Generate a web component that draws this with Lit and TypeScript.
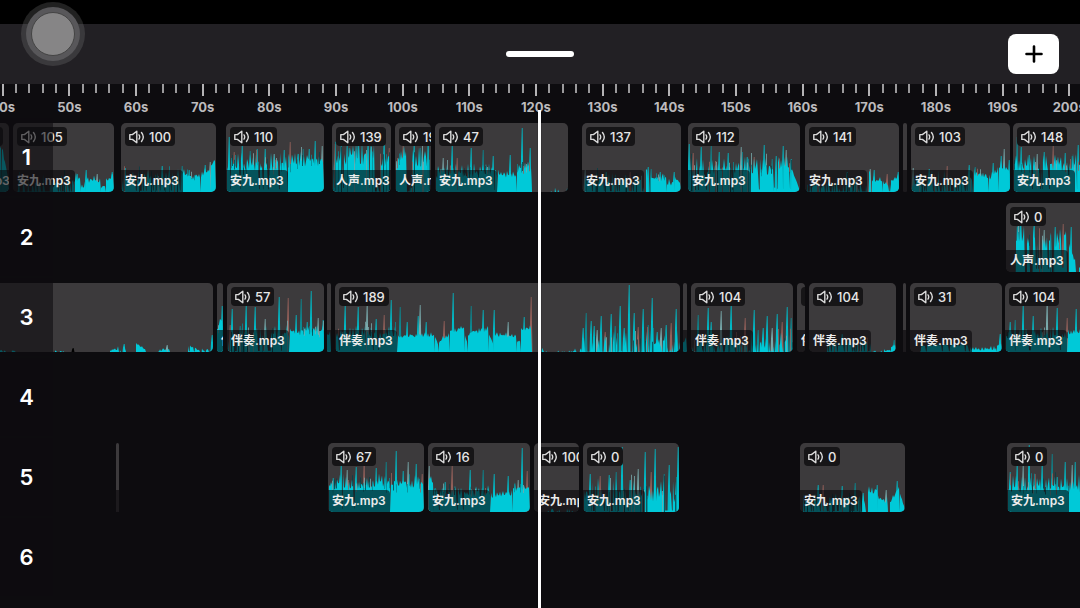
import { LitElement, html, svg, css } from "lit";
import { customElement, property } from "lit/decorators.js";
import { styleMap } from "lit/directives/style-map.js";

/** from, to, height at start, height at end, jitter, share of silent columns */
type Segment = [number, number, number, number, number, number];
/** x, height */
type Spike = [number, number];

interface Clip {
  start: number;
  end: number;
  name?: string;
  volume?: number;
  wave?: Segment[];
  spikes?: Spike[];
}

const CLIP_HEIGHT = 69;
const PX_PER_TEN_SECONDS = 200 / 3;
const FIRST_MARK = 40;
const FIRST_MARK_X = 8 / 3;

const V = "人声.mp3";
const A = "安九.mp3";
const B = "伴奏.mp3";

const tracks: Clip[][] = [
  [
    { start: -48, end: 9, name: A, volume: 110, wave: [[44, 50, 26, 46, 6, 0], [50, 57, 40, 10, 6, 0]] },
    { start: 13, end: 114, name: A, volume: 105, wave: [[4, 62, 2, 4, 14, 0.4], [62, 68, 8, 12, 10, 0.2], [68, 73, 3, 5, 6, 0], [73, 88, 9, 7, 8, 0], [88, 93, 3, 4, 4, 0], [93, 101, 10, 14, 6, 0]], spikes: [[64, 18], [73, 22], [84, 18], [99, 20]] },
    { start: 121, end: 216, name: A, volume: 100, wave: [[1, 61, 8, 10, 14, 0.25], [61, 80, 14, 11, 9, 0], [80, 90, 14, 19, 8, 0], [90, 95, 24, 32, 4, 0]], spikes: [[4, 24], [27, 22], [41, 26], [61, 26], [68, 22], [84, 27], [89, 30]] },
    { start: 226, end: 324, name: A, volume: 110, wave: [[1, 62, 20, 18, 20, 0.08], [62, 98, 24, 26, 15, 0]], spikes: [[3, 55], [8, 40], [16, 47], [24, 41], [31, 43], [39, 43], [48, 38], [58, 42], [64, 50], [72, 38], [77, 43], [83, 43], [89, 51], [96, 46]] },
    { start: 332, end: 391, name: V, volume: 139, wave: [[1, 43, 28, 26, 24, 0.14], [43, 48, 4, 4, 4, 0.3], [48, 58, 24, 22, 22, 0.12]], spikes: [[3, 48], [9, 46], [17, 44], [26, 49], [36, 47], [39, 45], [52, 55], [57, 44]] },
    { start: 395, end: 431, name: V, volume: 195, wave: [[1, 12, 24, 34, 14, 0], [12, 16, 2, 4, 6, 0.3], [16, 35, 26, 24, 22, 0.18]], spikes: [[8, 48], [19, 50], [25, 44], [33, 52]] },
    { start: 435, end: 568, name: A, volume: 47, wave: [[1, 63, 13, 14, 14, 0.06], [63, 82, 14, 14, 8, 0], [82, 97, 20, 21, 9, 0], [108, 133, 0, 0, 4, 0.7]], spikes: [[8, 34], [17, 47], [22, 34], [36, 44], [48, 42], [58, 36], [75, 37], [87, 64], [95, 44]] },
    { start: 582, end: 681, name: A, volume: 137, wave: [[1, 62, 5, 5, 15, 0.3], [64, 66, 22, 22, 1, 0], [69, 85, 10, 11, 9, 0], [85, 93, 4, 7, 8, 0], [93, 99, 10, 9, 6, 0]], spikes: [[3, 22], [24, 20], [48, 20], [66, 25], [69, 23], [78, 20], [92, 20]] },
    { start: 688, end: 800, name: A, volume: 112, wave: [[1, 63, 14, 16, 19, 0.16], [63, 86, 18, 16, 16, 0.1], [86, 89, 3, 3, 2, 0], [89, 104, 22, 20, 14, 0.06], [104, 112, 22, 0, 2, 0]], spikes: [[1, 48], [5, 39], [13, 45], [23, 46], [31, 40], [40, 39], [53, 45], [59, 35], [66, 35], [76, 47], [84, 33], [88, 36], [95, 46], [98, 42], [103, 33]] },
    { start: 805, end: 899, name: A, volume: 141, wave: [[1, 62, 2, 3, 14, 0.45], [64, 66, 20, 20, 1, 0], [67, 78, 9, 10, 8, 0], [78, 86, 4, 5, 7, 0.1], [86, 94, 9, 15, 4, 0]], spikes: [[42, 20], [65, 23], [69, 22], [82, 18], [93, 20]] },
    { start: 903, end: 907, name: "" },
    { start: 911, end: 1010, name: A, volume: 103, wave: [[1, 62, 4, 7, 16, 0.3], [63, 78, 16, 11, 9, 0], [78, 88, 11, 20, 7, 0], [88, 99, 24, 18, 8, 0]], spikes: [[2, 24], [18, 23], [36, 26], [58, 27], [64, 25], [82, 29], [90, 36], [93, 43], [98, 32]] },
    { start: 1013, end: 1100, name: A, volume: 148, wave: [[1, 87, 20, 20, 18, 0.08]], spikes: [[4, 55], [8, 45], [16, 37], [24, 38], [31, 40], [40, 46], [52, 39], [59, 36], [65, 47]] },
  ],
  [
    { start: 1006, end: 1100, name: V, volume: 0, wave: [[10, 19, 30, 28, 22, 0.1], [21, 24, 24, 28, 18, 0], [27, 46, 22, 22, 22, 0.15], [49, 61, 24, 32, 16, 0.1], [63, 70, 26, 4, 6, 0], [73, 94, 30, 20, 14, 0.2]], spikes: [[11, 45], [14, 51], [28, 49], [38, 42], [49, 45], [57, 48], [65, 45]] },
  ],
  [
    { start: -50, end: 213, wave: [[50, 70, 0, 0, 3, 0.6], [105, 115, 0, 0, 2, 0.5], [160, 176, 0, 1, 5, 0.3], [186, 196, 8, 1, 2, 0], [208, 220, 0, 2, 3, 0.3], [238, 250, 6, 1, 2, 0.1], [250, 262, 0, 2, 3, 0.3]], spikes: [[123, 4], [174, 8], [217, 7], [262, 17]] },
    { start: 217, end: 223, name: B, wave: [[0, 6, 20, 30, 10, 0]], spikes: [[5, 46]] },
    { start: 227, end: 324, name: B, volume: 57, wave: [[1, 63, 6, 9, 18, 0.16], [63, 97, 16, 17, 10, 0]], spikes: [[3, 27], [5, 43], [13, 26], [19, 47], [28, 45], [38, 33], [52, 55], [61, 54], [69, 37], [74, 53], [80, 30], [84, 61], [91, 34], [96, 32]] },
    { start: 327, end: 331, name: "", wave: [[0, 4, 14, 18, 5, 0]] },
    { start: 335, end: 680, name: B, volume: 189, wave: [[1, 63, 12, 13, 13, 0.06], [63, 100, 14, 15, 5, 0], [100, 104, 15, 5, 1, 0], [104, 115, 8, 16, 5, 0], [115, 130, 19, 22, 5, 0], [130, 133, 16, 6, 1, 0], [133, 154, 16, 21, 6, 0], [154, 159, 17, 6, 1, 0], [159, 182, 15, 14, 5, 0], [182, 186, 9, 12, 2, 0], [186, 197, 20, 23, 5, 0], [199, 247, 0, 0, 4, 0.7], [247, 345, 1, 1, 19, 0.4]], spikes: [[10, 47], [23, 45], [32, 49], [41, 33], [49, 37], [56, 52], [65, 45], [72, 30], [83, 36], [85, 47], [91, 30], [109, 31], [118, 59], [136, 46], [148, 42], [159, 42], [173, 30], [189, 35], [196, 55], [248, 24], [251, 39], [256, 31], [259, 26], [262, 22], [266, 36], [270, 20], [276, 38], [280, 26], [285, 46], [289, 24], [294, 67], [299, 39], [303, 25], [308, 43], [313, 27], [317, 54], [322, 20], [326, 24], [331, 27], [336, 29], [341, 43]] },
    { start: 683, end: 687, name: "", wave: [[0, 4, 8, 10, 5, 0.2]] },
    { start: 691, end: 793, name: B, volume: 104, wave: [[1, 102, 1, 2, 18, 0.38]], spikes: [[7, 37], [17, 44], [20, 30], [30, 41], [40, 48], [54, 34], [63, 42], [67, 22], [72, 24], [76, 36], [81, 24], [86, 38], [91, 30], [96, 45], [100, 34]] },
    { start: 797, end: 805, name: B, volume: 104 },
    { start: 809, end: 896, name: B, volume: 104, wave: [[18, 62, 3, 5, 9, 0.25], [63, 73, 0, 0, 2, 0.4], [75, 82, 0, 1, 3, 0.4], [82, 87, 4, 7, 3, 0]], spikes: [[33, 18], [85, 12]] },
    { start: 903, end: 906, name: "" },
    { start: 910, end: 1002, name: B, volume: 31, wave: [[10, 60, 4, 5, 6, 0.1], [60, 87, 1, 2, 4, 0], [87, 92, 5, 8, 3, 0]], spikes: [[90, 18]] },
    { start: 1005, end: 1100, name: B, volume: 104, wave: [[1, 63, 10, 13, 12, 0.08], [63, 95, 16, 24, 6, 0]], spikes: [[5, 30], [10, 32], [18, 47], [28, 36], [42, 52], [52, 44], [62, 34], [71, 43]] },
  ],
  [],
  [
    { start: 116, end: 119, name: "" },
    { start: 328, end: 424, name: A, volume: 67, wave: [[1, 63, 22, 23, 15, 0.04], [63, 96, 23, 23, 13, 0]], spikes: [[5, 34], [13, 48], [19, 42], [28, 45], [36, 52], [48, 44], [58, 50], [68, 61], [75, 41], [80, 50], [88, 48], [94, 38]] },
    { start: 428, end: 530, name: A, volume: 16, wave: [[1, 6, 34, 24, 8, 0], [6, 63, 14, 15, 11, 0.05], [63, 85, 14, 16, 7, 0], [85, 102, 20, 21, 9, 0]], spikes: [[1, 46], [17, 30], [24, 47], [42, 42], [55, 42], [66, 38], [80, 36], [90, 32], [94, 64], [99, 41]] },
    { start: 534, end: 579, name: A, volume: 100, wave: [[8, 45, 0, 0, 5, 0.6]] },
    { start: 583, end: 679, name: A, volume: 0, wave: [[1, 63, 6, 7, 26, 0.2], [63, 96, 10, 9, 22, 0.18]], spikes: [[7, 38], [17, 36], [26, 37], [33, 40], [39, 65], [47, 32], [55, 43], [62, 60], [68, 40], [72, 63], [81, 38], [86, 47], [95, 65]] },
    { start: 800, end: 905, name: A, volume: 0, wave: [[3, 62, 4, 7, 15, 0.32], [63, 66, 16, 3, 2, 0], [68, 78, 18, 18, 8, 0], [78, 88, 11, 8, 8, 0], [90, 100, 8, 24, 4, 0], [100, 105, 18, 2, 2, 0]], spikes: [[18, 27], [23, 27], [42, 26], [55, 29], [63, 19], [77, 27], [86, 22], [97, 31]] },
    { start: 1007, end: 1100, name: A, volume: 0, wave: [[1, 93, 18, 19, 17, 0.06]], spikes: [[3, 40], [10, 49], [16, 47], [22, 67], [28, 38], [35, 50], [45, 58], [50, 35], [58, 50], [65, 47], [68, 50]] },
  ],
  [],
];

function randomFrom(seed: number) {
  let s = (Math.abs(seed) * 7919 + 17) % 2147483647;
  return () => {
    s = (s * 48271) % 2147483647;
    return s / 2147483647;
  };
}

@customElement("wave-form")
class WaveForm extends LitElement {
  @property({ attribute: false }) clip!: Clip;

  static styles = css`
    :host { display: block; height: 100%; }
    .wave { display: block; width: 100%; height: 100%; }
    .body { fill: #00c9d8; }
    .spike { fill: #00b9c6; }
    .teal { fill: #0a8a93; }
    .pale { fill: #78a9ab; }
    .red { fill: #94605a; }
    .dark { fill: #0b3f46; }
  `;

  render() {
    const { start, end, wave = [], spikes = [] } = this.clip;
    const rand = randomFrom(start + end * 3);
    const floor = CLIP_HEIGHT;
    const accents: { x: number; h: number; depth: number; tone: string }[] = [];
    let d = "";
    for (const [from, to, h0, h1, jitter, gap] of wave) {
      d += `M${from} ${floor}`;
      for (let x = from; x < to; x++) {
        const base = h0 + ((h1 - h0) * (x - from)) / (to - from);
        const silent = rand() < gap;
        const peak = rand();
        const h = silent ? base * 0.15 : base + jitter * (x % 3 === 0 ? 0.35 + peak * 0.75 : peak * 0.6);
        d += `L${x} ${(floor - h).toFixed(1)}`;
        if (silent) d += `L${x + 0.7} ${(floor - h).toFixed(1)}`;
        const roll = rand();
        if (jitter > 8 && !silent && roll < 0.22) {
          accents.push({
            x,
            h: h + 4,
            depth: gap > 0.1 ? 0 : 0.7,
            tone: roll < 0.04 ? "red" : roll < 0.09 ? "pale" : roll < 0.16 ? "teal" : "dark",
          });
        }
      }
      d += `L${to} ${floor}Z`;
    }
    const tones = ["spike", "pale", "spike", "red", "spike", "teal", "spike"];
    const needle = (x: number, h: number) =>
      `M${x - 1.5} ${floor}L${x - 1} ${floor - h * 0.55}L${x - 0.2} ${floor - h}L${x + 0.6} ${floor - h}L${x + 1} ${floor - h * 0.55}L${x + 1.5} ${floor}Z`;
    return html`<svg class="wave" viewBox="0 0 ${end - start} ${CLIP_HEIGHT}" preserveAspectRatio="none" aria-hidden="true">
      ${spikes.map(([x, h], i) => svg`<path class=${h > 62 ? "spike" : tones[(i + start + 49) % 7]} d=${needle(x, h)} />`)}
      <path class="body" d=${d} />
      ${accents.map((a) => svg`<path class=${a.tone} d=${`M${a.x} ${floor - a.h * a.depth}V${floor - a.h}h.8V${floor - a.h * a.depth}Z`} />`)}
    </svg>`;
  }
}

@customElement("audio-clip")
class AudioClip extends LitElement {
  @property({ attribute: false }) clip!: Clip;

  static styles = css`
    :host { display: block; flex: none; height: 69px; }
    .clip { display: grid; height: 100%; overflow: hidden; border-radius: 5px; background: #3c3a3c; }
    .layer { grid-area: 1 / 1; min-width: 0; height: 69px; }
    .info { display: flex; flex-direction: column; justify-content: space-between; align-items: flex-start; }
    .volume {
      display: flex; align-items: center; gap: 4px; height: 19px; margin: 4px 0 0 4px; padding: 0 4px;
      border-radius: 4px; background: #161517; color: #e6e6e6; font-size: 13px; font-weight: 500; white-space: nowrap;
    }
    .icon { flex: none; width: 16px; height: 14px; fill: none; stroke: #dadada; stroke-width: 1.4; stroke-linejoin: round; stroke-linecap: round; }
    .name {
      min-width: 4px; height: 22px; box-sizing: border-box; padding: 0 4px; margin-top: auto; line-height: 22px;
      border-top-right-radius: 4px; background: rgba(6, 5, 8, 0.6); color: #ececec; font-size: 12px; font-weight: 600; white-space: nowrap;
    }
  `;

  render() {
    const { name, volume } = this.clip;
    return html`<div class="clip">
      <wave-form class="layer" .clip=${this.clip}></wave-form>
      <div class="layer info">
        ${volume === undefined
          ? null
          : html`<span class="volume">
              <svg class="icon" viewBox="0 0 16 14" aria-hidden="true">
                <path d="M.8 4.600h2.600L7.800 1.200v11.600L3.400 9.400H.8z" />
                <path d="M10 4.900q1.400 2.100 0 4.200M12.500 2.500q3.600 4.500 0 9" />
              </svg>
              <span>${volume}</span>
            </span>`}
        ${name === undefined ? null : html`<span class="name">${name}</span>`}
      </div>
    </div>`;
  }
}

@customElement("app-root")
class AppRoot extends LitElement {
  static styles = css`
    :host {
      display: block; position: relative; min-height: 100vh; overflow: hidden; background: #0d0c0f; color: #fff;
      font-family: Inter, "Noto Sans CJK SC", sans-serif;
    }
    .status { height: 24px; background: #000; }
    .header {
      display: grid; grid-template-columns: 1fr auto 1fr; align-items: center; height: 60px; box-sizing: border-box;
      padding: 0 21px; background: #222024;
    }
    .handle { grid-column: 2; width: 68px; height: 6px; padding: 0; border: 0; border-radius: 3px; background: #fff; }
    .add {
      justify-self: end; display: grid; place-items: center; width: 51px; height: 40px; padding: 0; border: 0;
      border-radius: 8px; background: #fff;
    }
    .plus { width: 18px; height: 18px; stroke: #000; stroke-width: 2.6; stroke-linecap: round; }
    .ruler { display: flex; height: 34px; overflow: hidden; }
    .mark { flex: none; }
    .ticks { display: flex; justify-content: space-around; height: 14px; }
    .tick { width: 2px; height: 9px; background: #9b9a9c; }
    .tick:nth-child(3) { height: 12px; background: #b4b3b5; }
    .time { display: block; text-align: center; color: #bcbbbd; font-size: 13px; line-height: 18px; font-weight: 700; }
    .tracks { margin: 0; padding: 0; list-style: none; }
    .track { display: grid; height: 80px; overflow: hidden; }
    .clips { grid-area: 1 / 1; display: flex; align-items: flex-start; min-width: 0; padding-top: 5px; }
    .gutter {
      grid-area: 1 / 1; z-index: 1; display: grid; place-items: center; width: 53px; height: 78px;
      background: rgba(13, 12, 15, 0.6); font-size: 22px; font-weight: 600;
    }
    .playhead { position: absolute; z-index: 2; top: 110px; bottom: 0; left: 50%; width: 3px; margin-left: -2px; background: #fff; box-shadow: 0 0 1px #000; }
    .assist { position: absolute; z-index: 3; top: 2px; left: 21px; width: 64px; height: 64px; padding: 0; border: 0; background: none; }
    .knob { display: block; width: 64px; height: 64px; }
  `;

  private renderMark(i: number) {
    const style = { width: `${PX_PER_TEN_SECONDS}px`, marginLeft: i ? "0" : `${FIRST_MARK_X - PX_PER_TEN_SECONDS / 2}px` };
    return html`<div class="mark" style=${styleMap(style)}>
      <div class="ticks">${[0, 1, 2, 3, 4].map(() => html`<i class="tick"></i>`)}</div>
      <span class="time">${FIRST_MARK + i * 10}s</span>
    </div>`;
  }

  private renderTrack(clips: Clip[], index: number) {
    let cursor = 0;
    return html`<li class="track">
      <div class="clips">
        ${clips.map((clip) => {
          const style = { marginLeft: `${clip.start - cursor}px`, width: `${clip.end - clip.start}px` };
          cursor = clip.end;
          return html`<audio-clip .clip=${clip} style=${styleMap(style)}></audio-clip>`;
        })}
      </div>
      <div class="gutter">${index + 1}</div>
    </li>`;
  }

  render() {
    return html`
      <div class="status"></div>
      <header class="header">
        <button class="handle" aria-label="Resize panel"></button>
        <button class="add" aria-label="Add track">
          <svg class="plus" viewBox="0 0 18 18" aria-hidden="true"><path d="M9 1.500v15M1.500 9h15" /></svg>
        </button>
      </header>
      <div class="ruler">${Array.from({ length: 17 }, (_, i) => this.renderMark(i))}</div>
      <ol class="tracks">${tracks.map((t, i) => this.renderTrack(t, i))}</ol>
      <div class="playhead"></div>
      <button class="assist" aria-label="Assistive touch">
        <svg class="knob" viewBox="0 0 64 64" aria-hidden="true">
          <circle cx="32" cy="32" r="32" fill="#8a8a8a" fill-opacity=".24" />
          <circle cx="32" cy="32" r="27" fill="#58575a" />
          <circle cx="32" cy="32" r="21.500" fill="#868586" stroke="#444" />
        </svg>
      </button>
    `;
  }
}
